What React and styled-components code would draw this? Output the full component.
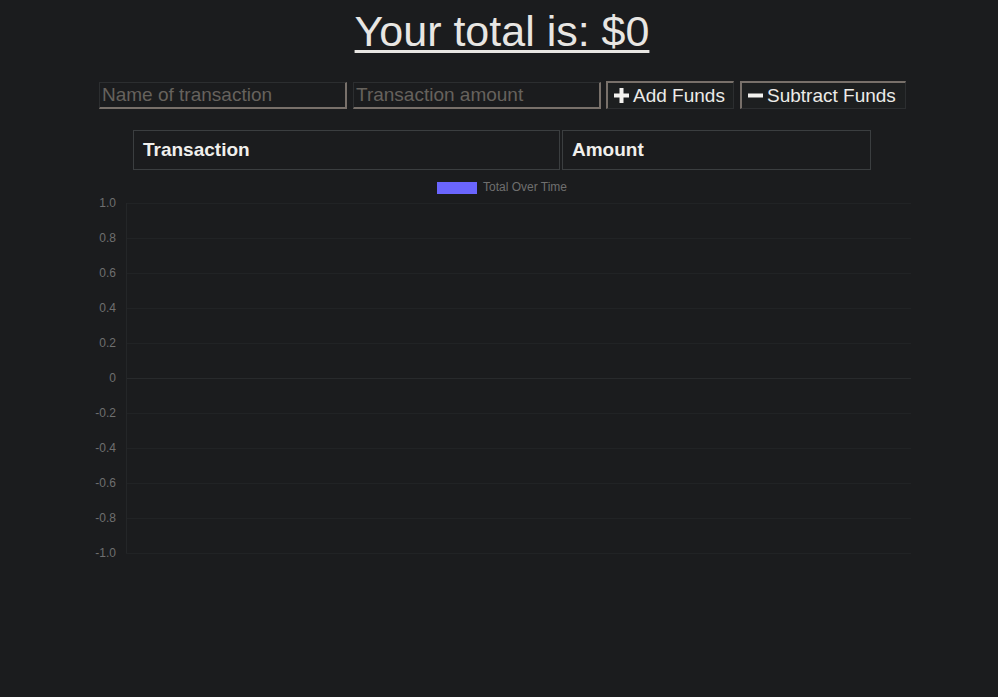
import React from "react";
import styled, { createGlobalStyle } from "styled-components";

const Global = createGlobalStyle`
  html, body { margin: 0; padding: 0; background: #1b1c1e; }
  body { font-family: "Liberation Sans", Arial, sans-serif; color: #e8e6e3; min-height: 697px; }
`;

const Page = styled.div`
  display: flex;
  flex-direction: column;
  align-items: stretch;
`;

const Title = styled.h1`
  margin: 7px 0 0 0;
  font-size: 43px;
  line-height: 48px;
  font-weight: 400;
  text-align: center;
  padding-left: 6px;
  text-decoration: underline;
  text-decoration-thickness: 3px;
  text-underline-offset: 4px;
  text-decoration-skip-ink: all;
`;

const Form = styled.div`
  display: flex;
  margin: 27px 0 0 99px;
  height: 27px;
`;

const Input = styled.input`
  box-sizing: border-box;
  width: 248px;
  height: 27px;
  margin-right: ${(p) => p.$gap}px;
  padding: 0 2px;
  background: #1b1c1e;
  border-style: solid;
  border-width: 1px 2px 2px 1px;
  border-color: #2c2e30 #78706a #78706a #2c2e30;
  color: #e8e6e3;
  font-family: "Liberation Sans", Arial, sans-serif;
  font-size: 19px;
  outline: none;
  &::placeholder { color: #66625d; }
`;

const Button = styled.button`
  box-sizing: border-box;
  width: ${(p) => p.$w}px;
  height: 28px;
  margin-top: -1px;
  margin-right: ${(p) => p.$gap || 0}px;
  display: flex;
  align-items: center;
  gap: 4px;
  padding: 0 0 0 6px;
  background: #1d1f20;
  border-style: solid;
  border-width: 2px 1px 1px 2px;
  border-color: #78706a #2c2e30 #2c2e30 #78706a;
  color: #ecebe8;
  font-family: "Liberation Sans", Arial, sans-serif;
  font-size: 19px;
  line-height: 20px;
`;

const Table = styled.table`
  margin: 19px 0 0 131px;
  width: 742px;
  border-spacing: 2px;
`;

const Th = styled.th`
  box-sizing: border-box;
  height: 40px;
  width: ${(p) => p.$w}px;
  border: 1px solid #3b3e40;
  padding: 0 9px;
  text-align: left;
  font-family: Arial, "Liberation Sans", sans-serif;
  font-size: 19px;
  font-weight: 700;
  color: #f0efec;
`;

const ChartWrap = styled.div`
  margin: -1px auto 0 84px;
  width: 830px;
  height: 400px;
`;

const Plus = () => (
  <svg width="15" height="15" viewBox="0 0 15 15">
    <rect x="5.5" y="0" width="4" height="15" fill="#f3f2ef" />
    <rect x="0" y="5.5" width="15" height="4" fill="#f3f2ef" />
  </svg>
);

const Minus = () => (
  <svg width="15" height="15" viewBox="0 0 15 15">
    <rect x="0" y="5.5" width="15" height="4" fill="#f3f2ef" />
  </svg>
);

const labels = ["1.0", "0.8", "0.6", "0.4", "0.2", "0", "-0.2", "-0.4", "-0.6", "-0.8", "-1.0"];

const Chart = () => (
  <svg width="830" height="400" viewBox="0 0 830 400">
    <rect x="353" y="11" width="40" height="12" fill="#6a65fe" />
    <text x="399" y="20" fontSize="12" fill="#6f6f6f" fontFamily="Liberation Sans, Arial, sans-serif">
      Total Over Time
    </text>
    {labels.map((l, i) => {
      const y = 32 + i * 35;
      return (
        <g key={l}>
          <line x1="42" x2="827" y1={y + 0.5} y2={y + 0.5} stroke={l === "0" ? "#282a2c" : "#212325"} strokeWidth="1" />
          <text x="32" y={y + 4} fontSize="12" textAnchor="end" fill="#6f6f6f" fontFamily="Liberation Sans, Arial, sans-serif">
            {l}
          </text>
        </g>
      );
    })}
    <line x1="42.5" x2="42.5" y1="32" y2="382" stroke="#242628" strokeWidth="1" />
  </svg>
);

export default function App() {
  return (
    <Page>
      <Global />
      <Title>Your total is: $0</Title>
      <Form>
        <Input placeholder="Name of transaction" $gap={6} />
        <Input placeholder="Transaction amount" $gap={5} />
        <Button $w={128} $gap={6}>
          <Plus />
          Add Funds
        </Button>
        <Button $w={166}>
          <Minus />
          Subtract Funds
        </Button>
      </Form>
      <Table>
        <thead>
          <tr>
            <Th $w={427}>Transaction</Th>
            <Th $w={309}>Amount</Th>
          </tr>
        </thead>
      </Table>
      <ChartWrap>
        <Chart />
      </ChartWrap>
    </Page>
  );
}
